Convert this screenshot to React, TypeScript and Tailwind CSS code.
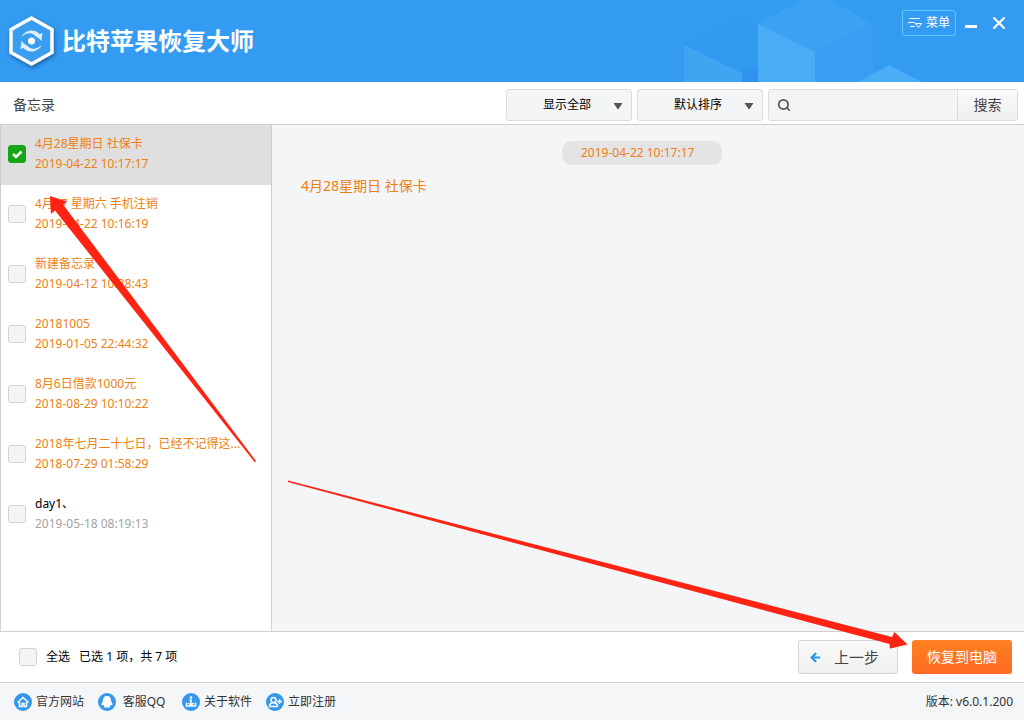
import { useState } from "react";
import { ArrowLeft, Search, X } from "lucide-react";

const memos = [
  { id: 1, title: "4月28星期日 社保卡", time: "2019-04-22 10:17:17", deleted: true },
  { id: 2, title: "4月27 星期六 手机注销", time: "2019-04-22 10:16:19", deleted: true },
  { id: 3, title: "新建备忘录", time: "2019-04-12 10:38:43", deleted: true },
  { id: 4, title: "20181005", time: "2019-01-05 22:44:32", deleted: true },
  { id: 5, title: "8月6日借款1000元", time: "2018-08-29 10:10:22", deleted: true },
  { id: 6, title: "2018年七月二十七日，已经不记得这...", time: "2018-07-29 01:58:29", deleted: true },
  { id: 7, title: "day1、", time: "2019-05-18 08:19:13", deleted: false },
];

const checkboxStyle =
  "size-[18px] shrink-0 appearance-none rounded-[3px] border border-[#d4d4d4] bg-[#f4f4f4] checked:border-[#16a716] checked:bg-[#16a716]";

function CheckBox({ id, checked, onChange }: { id: string; checked: boolean; onChange: () => void }) {
  return (
    <span className="relative flex size-[18px] shrink-0">
      <input id={id} type="checkbox" checked={checked} onChange={onChange} className={checkboxStyle} />
      {checked && (
        <svg viewBox="0 0 18 18" className="pointer-events-none absolute inset-0 size-[18px]">
          <path d="M5 9l3 3 5.500-5.500" fill="none" stroke="#fff" strokeWidth="2.500" />
        </svg>
      )}
    </span>
  );
}

function Logo() {
  return (
    <svg viewBox="0 0 52 58" className="h-[58px] w-[52px] drop-shadow-[1px_2px_2px_rgba(0,40,90,0.5)]">
      <path d="M26.500 6 47 17.500v23L26.500 52 6 40.500v-23z" fill="#3a9df0" stroke="#fff" strokeWidth="3.500" />
      <circle cx="26.500" cy="29" r="3.500" fill="#fff" />
      <path d="M16.500 25c3-7 13-9 18-3l3-1-1 8c-3-4-6-4-7-6-4-3-9-2-13 2z" fill="#dceeff" />
      <path d="M36.500 33c-3 7-13 9-18 3l-3 1 1-8c3 4 6 4 7 6 4 3 9 2 13-2z" fill="#dceeff" />
    </svg>
  );
}

function Header() {
  return (
    <header className="relative flex h-[82px] shrink-0 justify-between overflow-hidden bg-[#339cf2] text-white">
      <svg viewBox="0 0 354 82" className="absolute top-0 right-0 h-[82px] w-[354px]">
        <path d="M14 45 72 18 88 26v56H14z" fill="#3299f1" />
        <path d="M72 73l16-7v16H72z" fill="#2f92ee" />
        <path d="M14 45l58 28v9H14z" fill="#3fa5f3" />
        <path d="M88 24 132 0h28l43 24-58 28z" fill="#3ba2f3" />
        <path d="M88 24l57 28v30H88z" fill="#49acf5" />
        <path d="M145 52l58-28v58h-58z" fill="#379ef2" />
        <path d="M188 82l31-17 33 17z" fill="#4aadf5" />
      </svg>
      <div className="flex items-center gap-[5px] pl-[5px]">
        <Logo />
        <h1 className="text-2xl font-bold">比特苹果恢复大师</h1>
      </div>
      <div className="relative flex items-start pt-[10px] pr-[15px]">
        <button className="flex h-[26px] items-center gap-1 rounded-[3px] border border-[#5fc8fa] px-[5px]">
          <svg viewBox="0 0 14 14" className="size-[14px]" fill="none" stroke="#fff">
            <path d="M1 2.500h11M0 6.500h7M2 10.500h5M7.500 7.500h6l-3 4z" />
          </svg>
          <span>菜单</span>
        </button>
        <button aria-label="最小化" className="mt-[15px] ml-[9px] h-[3px] w-3 bg-white" />
        <button aria-label="关闭" className="mt-[3px] ml-3">
          <X size={20} strokeWidth={2.5} />
        </button>
      </div>
    </header>
  );
}

function DropDown({ label, option }: { label: string; option: string }) {
  return (
    <div className="relative">
      <select
        aria-label={label}
        className="h-8 w-[126px] appearance-none rounded-[3px] border border-[#dcdcdc] bg-[#f4f5f6] pl-9 text-black"
      >
        <option>{option}</option>
      </select>
      <svg viewBox="0 0 10 6" className="pointer-events-none absolute top-[14px] right-[9px] h-[6px] w-[10px]">
        <path d="M1 0h8L5 6z" fill="#555" stroke="#555" />
      </svg>
    </div>
  );
}

function Toolbar() {
  return (
    <div className="flex h-[43px] shrink-0 items-center justify-between border-b border-[#d0d0d0] pt-[3px] pr-[6px] pl-[13px]">
      <h2 className="pt-px text-sm text-[#444]">备忘录</h2>
      <div className="flex gap-[5px]">
        <DropDown label="筛选" option="显示全部" />
        <DropDown label="排序" option="默认排序" />
        <form className="flex h-8 w-[250px] overflow-hidden rounded-[3px] border border-[#dcdcdc] bg-[#f4f4f4]">
          <label htmlFor="keyword" className="flex items-center pl-2">
            <Search size={14} strokeWidth={3} className="text-[#555]" />
          </label>
          <input id="keyword" aria-label="关键字" className="min-w-0 flex-1 px-2 outline-none" />
          <button type="button" className="w-[60px] border-l border-[#dcdcdc] bg-linear-to-b from-[#fafafa] to-[#efefef] text-sm text-[#444]">
            搜索
          </button>
        </form>
      </div>
    </div>
  );
}

const footerLinks = [
  {
    text: "官方网站",
    icon: <path d="M3.500 9.500 9 4.500l5.500 5M5.500 9v4.500h2.500v-3h2v3h2.500V9" fill="none" stroke="#fff" strokeWidth="1.500" />,
  },
  {
    text: "客服QQ",
    icon: (
      <path
        d="M9 3C6 3 5 5 5 8c-1.500 2-2 3.500-1 4.500L5.500 12l1 1.500-1 1h7l-1-1 1-1.500 1.500.5c1-1 .5-2.500-1-4.500 0-3-1-5-4-5z"
        fill="#fff"
      />
    ),
  },
  {
    text: "关于软件",
    icon: (
      <>
        <circle cx="9" cy="4.500" r="1.300" fill="#fff" />
        <path d="M7.500 7H9v5M4.500 9.500v3.500h9V9.500M6.500 10 9 12.500l2.500-2.500" fill="none" stroke="#fff" strokeWidth="1.500" />
      </>
    ),
  },
  {
    text: "立即注册",
    icon: (
      <>
        <circle cx="7.500" cy="7" r="2.500" fill="none" stroke="#fff" strokeWidth="1.500" />
        <path d="M3.500 13.500c0-5 8-5 8 0zM11 8.500h5M13.500 6v5" fill="none" stroke="#fff" strokeWidth="1.500" />
      </>
    ),
  },
];

function Footer() {
  return (
    <footer className="flex h-[38px] shrink-0 items-center justify-between border-t border-[#d0d0d0] bg-[#f4f6f8] pr-[11px] pl-[14px] text-[#333]">
      <nav className="flex gap-[14px]">
        {footerLinks.map((link) => (
          <a key={link.text} href="#" className="flex min-w-[70px] items-center gap-1">
            <svg viewBox="0 0 18 18" className="size-[18px]">
              <circle cx="9" cy="9" r="9" fill="#3497ea" />
              {link.icon}
            </svg>
            <span className="flex-1 text-center">{link.text}</span>
          </a>
        ))}
      </nav>
      <span>版本: v6.0.1.200</span>
    </footer>
  );
}

// red pointers drawn over the window
function Arrows() {
  return (
    <svg viewBox="0 0 1024 720" className="pointer-events-none absolute top-0 left-0 h-[720px] w-[1024px]" fill="#fe2312">
      <path d="M50 196 67 201.500 63 204.500 256 461l-1 1.500L55 210.500 51 214z" />
      <path d="M288 480.500 892 637l2.500-5L907.500 644.500 890 648.500l-.5-4.500L288 482z" />
    </svg>
  );
}

function App() {
  const [checked, setChecked] = useState([1]);
  const [current, setCurrent] = useState(memos[0]);

  const toggle = (id: number) =>
    setChecked((ids) => (ids.includes(id) ? ids.filter((i) => i !== id) : [...ids, id]));
  const allChecked = checked.length === memos.length;

  return (
    <div className="relative flex min-h-screen flex-col bg-white font-['Noto_Sans','Noto_Sans_CJK_SC',sans-serif] text-xs text-black">
      <Header />
      <Toolbar />
      <main className="flex flex-1">
        <ul className="w-[272px] shrink-0 border-x border-[#d0d0d0]">
          {memos.map((memo) => (
            <li
              key={memo.id}
              onClick={() => setCurrent(memo)}
              className={`flex h-[60px] items-center gap-[9px] pb-[2px] pl-[7px] ${memo.id === current.id ? "bg-[#dfdfdf]" : ""}`}
            >
              <CheckBox id={`memo-${memo.id}`} checked={checked.includes(memo.id)} onChange={() => toggle(memo.id)} />
              <label
                htmlFor={`memo-${memo.id}`}
                className={`leading-5 whitespace-nowrap ${memo.deleted ? "text-[#ee7f10]" : "text-black"}`}
              >
                {memo.title}
                <br />
                <time className={memo.deleted ? "" : "text-[#a3a3a3]"}>{memo.time}</time>
              </label>
            </li>
          ))}
        </ul>
        <section className="flex flex-1 flex-col bg-[#f3f5f7] pt-4 pr-[41px] pl-[29px] text-[#ee7f10]">
          <time className="flex h-6 w-40 items-center self-center rounded-[10px] bg-[#e4e4e4] pl-[19px]">{current.time}</time>
          <p className="mt-[11px] text-sm">{current.title}</p>
        </section>
      </main>
      <div className="flex h-[51px] shrink-0 items-center justify-between border-t border-[#d0d0d0] pr-3 pl-[19px]">
        <div className="flex items-center gap-[9px]">
          <CheckBox id="all" checked={allChecked} onChange={() => setChecked(allChecked ? [] : memos.map((m) => m.id))} />
          <label htmlFor="all">全选</label>
          <span>
            已选 {checked.length} 项，共 {memos.length} 项
          </span>
        </div>
        <div className="flex gap-[14px]">
          <button className="flex h-[34px] w-[100px] items-center gap-3 rounded-[3px] border border-[#d4d4d4] bg-linear-to-b from-[#fafafa] to-[#efefef] pl-[10px] text-[15px] text-[#444]">
            <ArrowLeft size={13} strokeWidth={4} className="text-[#1f96ea]" />
            上一步
          </button>
          <button className="h-[34px] w-[100px] rounded-[3px] bg-linear-to-b from-[#ff8122] to-[#ff6a22] text-sm text-white">
            恢复到电脑
          </button>
        </div>
      </div>
      <Footer />
      <Arrows />
    </div>
  );
}

export default App;
